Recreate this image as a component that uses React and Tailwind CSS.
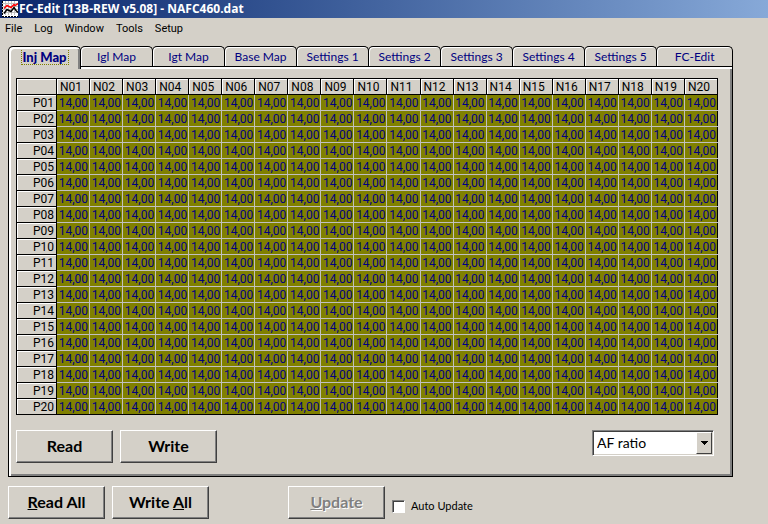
import React, { useState } from 'react';

const MENUS = ['File', 'Log', 'Window', 'Tools', 'Setup'];

const TABS = [
    'Inj Map',
    'Igl Map',
    'Igt Map',
    'Base Map',
    'Settings 1',
    'Settings 2',
    'Settings 3',
    'Settings 4',
    'Settings 5',
    'FC-Edit'
];

const STEPS = Array.from({ length: 20 }, (_, i) => String(i + 1).padStart(2, '0'));

const AppIcon = () => (
    <svg width="16" height="16" viewBox="0 0 16 16" aria-hidden="true">
        <rect width="16" height="16" fill="#fff" />
        <path d="M0 2.5h16M0 5.5h16M0 8.5h16M0 11.5h16M3.5 0v14M6.5 0v14M9.5 0v14M12.5 0v14" stroke="#c0c0c0" />
        <path d="M0.5 0v16M0 15.5h16" stroke="#000" strokeDasharray="2 1" />
        <path d="M2 7.5l3-3 2 1 2 1 3-3 1 1 3-2" fill="none" stroke="#f00" strokeWidth="1.5" />
        <path d="M2 12.5l3-4 2 1 2 1 3-4 2 3 2 2" fill="none" stroke="#000" strokeWidth="1.5" />
    </svg>
);

const PushButton = ({ children, disabled, className = '' }) => (
    <button
        type="button"
        disabled={disabled}
        className={`h-[33px] w-[97px] border border-t-white border-l-white border-r-[#404040] border-b-[#404040] pb-0.5 font-['Lato',sans-serif] text-base font-bold shadow-[inset_-1px_-1px_0_#808080] disabled:text-[#808080] disabled:[text-shadow:1px_1px_0_#fff] ${className}`}
    >
        {children}
    </button>
);

const MapTable = () => (
    <table className="w-full table-fixed border-collapse border border-black font-['Roboto',sans-serif] text-xs leading-[14px]">
        <thead>
            <tr className="h-4">
                <th className="w-10 border border-black p-0 shadow-[inset_1px_1px_0_#fff]" aria-label="Pressure" />
                {STEPS.map((n) => (
                    <th key={n} scope="col" className="border border-black p-0 pl-[3px] text-left font-normal shadow-[inset_1px_1px_0_#fff]">
                        N{n}
                    </th>
                ))}
            </tr>
        </thead>
        <tbody>
            {STEPS.map((p) => (
                <tr key={p} className="group h-4">
                    <th scope="row" className="border border-black p-0 pr-0.5 text-right font-normal shadow-[inset_1px_1px_0_#fff]">
                        P{p}
                    </th>
                    {STEPS.map((n) => (
                        <td
                            key={n}
                            className="border border-[#c0c0c0] bg-[#808000] p-0 pr-px text-right text-[#000080] group-last:border-b-black last:border-r-black"
                        >
                            14,00
                        </td>
                    ))}
                </tr>
            ))}
        </tbody>
    </table>
);

const App = () => {
    const [activeTab, setActiveTab] = useState('Inj Map');
    const [autoUpdate, setAutoUpdate] = useState(false);
    const [unit, setUnit] = useState('AF ratio');

    return (
        <div className="min-h-screen bg-[#d4d0c8] text-black">
            <header className="flex h-[18px] items-center gap-px bg-linear-to-r from-[#0a246a] to-[#87a9d8] pl-0.5">
                <AppIcon />
                <h1 className="font-['Open_Sans',sans-serif] text-xs font-bold whitespace-nowrap text-white">
                    FC-Edit [13B-REW v5.08] - NAFC460.dat
                </h1>
            </header>

            <nav className="flex h-7 gap-3 px-[5px] pt-[3px] font-['Roboto',sans-serif] text-[11px] leading-4">
                {MENUS.map((menu) => (
                    <button key={menu} type="button" className="h-4">
                        {menu}
                    </button>
                ))}
            </nav>

            <main className="mr-[35px] ml-2">
                <div role="tablist" className="flex h-5 pr-px font-['Lato',sans-serif] text-xs text-[#000080]">
                    {TABS.map((tab) => (
                        <button
                            key={tab}
                            type="button"
                            role="tab"
                            aria-selected={tab === activeTab}
                            onClick={() => setActiveTab(tab)}
                            className={
                                tab === activeTab
                                    ? 'relative z-10 -mr-px h-[23px] flex-[73] rounded-t-[5px] border border-b-0 border-black bg-[#d4d0c8] text-[13px] font-black shadow-[inset_2px_2px_0_#fff,inset_-2px_0_0_#808080] last:flex-[77]'
                                    : '-mr-px h-5 flex-[73] rounded-t-[5px] border border-b-0 border-black bg-[#d4d0c8] shadow-[inset_1px_1px_0_#fff] last:flex-[77]'
                            }
                        >
                            {tab === activeTab ? (
                                <span className="inline-block border border-t-0 border-dotted border-[#808000] px-px leading-[14px]">{tab}</span>
                            ) : (
                                tab
                            )}
                        </button>
                    ))}
                </div>

                <section className="border border-black pt-[11px] pr-[14px] pb-[13px] pl-[7px] shadow-[inset_2px_2px_0_#fff,inset_-2px_-2px_0_#808080]">
                    <MapTable />
                    <div className="mt-[15px] flex items-start gap-[7px] pr-1">
                        <PushButton>Read</PushButton>
                        <PushButton>Write</PushButton>
                        <div className="relative ml-auto">
                            <select
                                aria-label="Display unit"
                                value={unit}
                                onChange={(e) => setUnit(e.target.value)}
                                className="block h-[26px] w-[122px] appearance-none border border-t-[#808080] border-r-white border-b-white border-l-[#808080] bg-white pl-1 font-['Lato',sans-serif] text-sm shadow-[inset_1px_1px_0_#404040,inset_-1px_-1px_0_#d4d0c8]"
                            >
                                <option>AF ratio</option>
                                <option>Raw value</option>
                            </select>
                            <span className="pointer-events-none absolute top-0.5 right-0.5 flex h-[22px] w-4 items-center justify-center border border-t-white border-r-[#404040] border-b-[#404040] border-l-white bg-[#d4d0c8]">
                                <svg width="7" height="4" viewBox="0 0 7 4" shapeRendering="crispEdges" aria-hidden="true">
                                    <path d="M0 0h7v1H6v1H5v1H4v1H3V3H2V2H1V1H0z" />
                                </svg>
                            </span>
                        </div>
                    </div>
                </section>

                <footer className="flex items-start gap-[7px] pt-[9px]">
                    <PushButton>
                        <u>R</u>ead All
                    </PushButton>
                    <PushButton>
                        Write <u>A</u>ll
                    </PushButton>
                    <PushButton disabled className="ml-[72px]">
                        <u>U</u>pdate
                    </PushButton>
                    <label className="mt-3 flex items-center gap-1.5 font-['Lato',sans-serif] text-[11px]">
                        <input
                            type="checkbox"
                            checked={autoUpdate}
                            onChange={(e) => setAutoUpdate(e.target.checked)}
                            className="size-[13px] appearance-none border border-t-[#808080] border-r-white border-b-white border-l-[#808080] bg-white shadow-[inset_1px_1px_0_#404040] checked:bg-[#000080]"
                        />
                        Auto Update
                    </label>
                </footer>
            </main>
        </div>
    );
};

export default App;
